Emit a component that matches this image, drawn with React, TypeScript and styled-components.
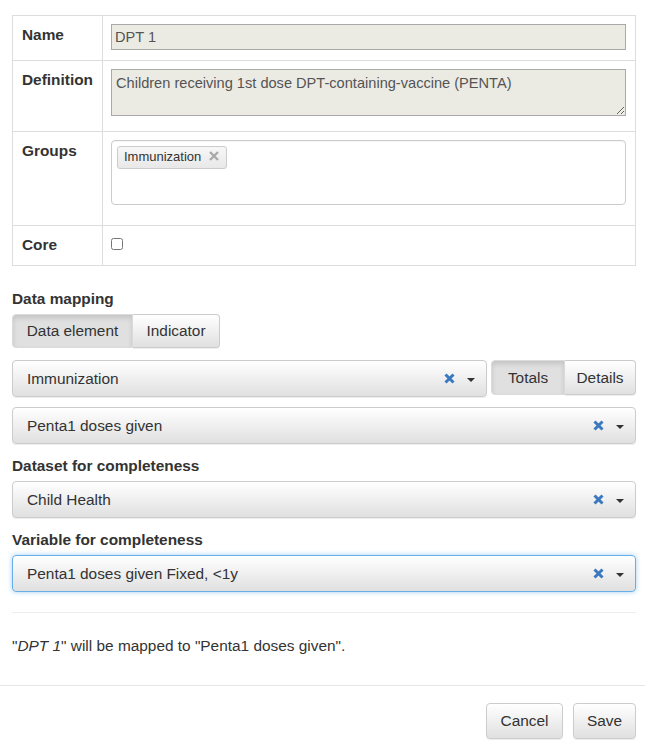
import React from "react";
import styled, { createGlobalStyle, css } from "styled-components";

const GlobalStyle = createGlobalStyle`
  body {
    margin: 0;
    background: #fff;
    font-family: "Liberation Sans", Arial, sans-serif;
    font-size: 15.4px;
    line-height: 22px;
    color: #333;
  }
`;

const Page = styled.div`
  width: 645px;
`;

const Body = styled.div`
  padding: 15px 9px 0 12px;
`;

const DetailTable = styled.table`
  width: 624px;
  border-collapse: collapse;
  border: 1px solid #ddd;
`;

const Row = styled.tr<{ $height: number }>`
  height: ${(p) => p.$height}px;
`;

const LabelCell = styled.th`
  width: 72px;
  padding: 8px 8px 8px 9px;
  border: 1px solid #ddd;
  text-align: left;
  vertical-align: top;
  font-weight: 700;
`;

const ValueCell = styled.td`
  padding: 8px;
  border: 1px solid #ddd;
  vertical-align: top;
`;

const fieldFont = css`
  font-family: "Liberation Sans", Arial, sans-serif;
  font-size: 14.6px;
  color: #545454;
`;

const TextInput = styled.input`
  display: block;
  box-sizing: border-box;
  width: 515px;
  height: 26px;
  margin: 0;
  padding: 1px 3px;
  border: 1px solid #a9a9a9;
  background: #ebebe4;
  ${fieldFont}
`;

const TextArea = styled.textarea`
  display: block;
  box-sizing: border-box;
  width: 515px;
  height: 47px;
  margin: 0;
  padding: 2px 4px;
  border: 1px solid #a9a9a9;
  background: #ebebe4;
  line-height: 22px;
  resize: vertical;
  ${fieldFont}
`;

const TagBox = styled.div`
  box-sizing: border-box;
  width: 515px;
  height: 65px;
  padding: 4px 5px;
  border: 1px solid #ccc;
  border-radius: 4px;
  box-shadow: inset 0 1px 1px rgba(0, 0, 0, 0.04);
`;

const Tag = styled.span`
  display: inline-flex;
  align-items: center;
  gap: 8px;
  box-sizing: border-box;
  height: 23px;
  padding: 0 7px 0 6px;
  border: 1px solid #ccc;
  border-radius: 3px;
  background: linear-gradient(#f7f7f7, #e8e8e8);
  font-size: 13px;
  color: #333;
`;

const TagRemove = styled.svg`
  width: 10px;
  height: 10px;
  margin-top: -3px;
`;

const Checkbox = styled.input`
  display: block;
  width: 12px;
  height: 12px;
  margin: 4px 0 0;
`;

const SectionLabel = styled.div<{ $top: number }>`
  margin-top: ${(p) => p.$top}px;
  margin-bottom: 4px;
  font-weight: 700;
`;

const ButtonGroup = styled.div<{ $height: number }>`
  display: inline-flex;
  height: ${(p) => p.$height}px;
  flex-shrink: 0;
`;

const ToggleButton = styled.button<{ $active?: boolean; $width: number }>`
  box-sizing: border-box;
  width: ${(p) => p.$width}px;
  height: 100%;
  margin: 0;
  padding: 0;
  border: 1px solid #ccc;
  font-family: inherit;
  font-size: 15.4px;
  color: #333;
  background: linear-gradient(#fff, #e0e0e0);
  box-shadow: inset 0 1px 0 rgba(255, 255, 255, 0.15), 0 1px 1px rgba(0, 0, 0, 0.075);
  &:first-child {
    border-radius: 4px 0 0 4px;
  }
  &:last-child {
    border-left: none;
    border-radius: 0 4px 4px 0;
  }
  ${(p) =>
    p.$active &&
    css`
      background: #e0e0e0;
      border-color: #dbdbdb;
      box-shadow: inset 0 3px 5px rgba(0, 0, 0, 0.125);
    `}
`;

const SelectRow = styled.div`
  display: flex;
  gap: 4px;
  margin-top: 12px;
`;

const SelectBox = styled.div<{ $focused?: boolean; $gap?: number }>`
  flex: 1;
  display: flex;
  align-items: center;
  box-sizing: border-box;
  height: 37px;
  margin-top: ${(p) => p.$gap ?? 0}px;
  padding: 0 11px 0 14px;
  border: 1px solid #ccc;
  border-radius: 4px;
  background: linear-gradient(#fff, #e0e0e0);
  box-shadow: inset 0 1px 0 rgba(255, 255, 255, 0.15), 0 1px 1px rgba(0, 0, 0, 0.075);
  ${(p) =>
    p.$focused &&
    css`
      border-color: #66afe9;
      box-shadow: 0 0 5px rgba(102, 175, 233, 0.6);
    `}
`;

const SelectValue = styled.span`
  flex: 1;
`;

const ClearIcon = styled.svg`
  width: 11px;
  height: 11px;
  margin-right: 12px;
`;

const Caret = styled.span`
  width: 0;
  height: 0;
  border-top: 4px solid #333;
  border-left: 4px solid transparent;
  border-right: 4px solid transparent;
  margin-top: 2px;
`;

const Divider = styled.hr`
  margin: 20px 0 0;
  border: 0;
  border-top: 1px solid #eee;
`;

const Message = styled.p`
  margin: 22px 0 28px;
`;

const Footer = styled.div`
  display: flex;
  justify-content: flex-end;
  gap: 10px;
  padding: 17px 9px 10px 0;
  border-top: 1px solid #e5e5e5;
`;

const FooterButton = styled.button<{ $width: number }>`
  box-sizing: border-box;
  width: ${(p) => p.$width}px;
  height: 36px;
  padding: 0;
  border: 1px solid #ccc;
  border-radius: 4px;
  font-family: inherit;
  font-size: 15.4px;
  color: #333;
  background: linear-gradient(#fff, #e0e0e0);
  box-shadow: inset 0 1px 0 rgba(255, 255, 255, 0.15), 0 1px 1px rgba(0, 0, 0, 0.075);
`;

const Select = ({
  value,
  focused,
  gap,
}: {
  value: string;
  focused?: boolean;
  gap?: number;
}) => (
  <SelectBox $focused={focused} $gap={gap}>
    <SelectValue>{value}</SelectValue>
    <ClearIcon viewBox="0 0 11 11">
      <path
        d="M1.5 1.5 L9.5 9.5 M9.5 1.5 L1.5 9.5"
        stroke="#3a79c0"
        strokeWidth="3"
      />
    </ClearIcon>
    <Caret />
  </SelectBox>
);

export default function App() {
  return (
    <Page>
      <GlobalStyle />
      <Body>
        <DetailTable>
          <tbody>
            <Row $height={45}>
              <LabelCell>Name</LabelCell>
              <ValueCell>
                <TextInput value="DPT 1" disabled readOnly />
              </ValueCell>
            </Row>
            <Row $height={71}>
              <LabelCell>Definition</LabelCell>
              <ValueCell>
                <TextArea
                  value="Children receiving 1st dose DPT-containing-vaccine (PENTA)"
                  disabled
                  readOnly
                />
              </ValueCell>
            </Row>
            <Row $height={94}>
              <LabelCell>Groups</LabelCell>
              <ValueCell>
                <TagBox>
                  <Tag>
                    Immunization
                    <TagRemove viewBox="0 0 10 10">
                      <path
                        d="M1 1 L9 9 M9 1 L1 9"
                        stroke="#aaa"
                        strokeWidth="2.4"
                      />
                    </TagRemove>
                  </Tag>
                </TagBox>
              </ValueCell>
            </Row>
            <Row $height={40}>
              <LabelCell>Core</LabelCell>
              <ValueCell>
                <Checkbox type="checkbox" />
              </ValueCell>
            </Row>
          </tbody>
        </DetailTable>

        <SectionLabel $top={22}>Data mapping</SectionLabel>
        <ButtonGroup $height={34}>
          <ToggleButton $active $width={121}>
            Data element
          </ToggleButton>
          <ToggleButton $width={87}>Indicator</ToggleButton>
        </ButtonGroup>

        <SelectRow>
          <Select value="Immunization" />
          <ButtonGroup $height={35}>
            <ToggleButton $active $width={74}>
              Totals
            </ToggleButton>
            <ToggleButton $width={71}>Details</ToggleButton>
          </ButtonGroup>
        </SelectRow>
        <Select value="Penta1 doses given" gap={10} />

        <SectionLabel $top={11}>Dataset for completeness</SectionLabel>
        <Select value="Child Health" />

        <SectionLabel $top={11}>Variable for completeness</SectionLabel>
        <Select value="Penta1 doses given Fixed, <1y" focused />

        <Divider />
        <Message>
          "<em>DPT 1</em>" will be mapped to "Penta1 doses given".
        </Message>
      </Body>
      <Footer>
        <FooterButton $width={77}>Cancel</FooterButton>
        <FooterButton $width={63}>Save</FooterButton>
      </Footer>
    </Page>
  );
}
